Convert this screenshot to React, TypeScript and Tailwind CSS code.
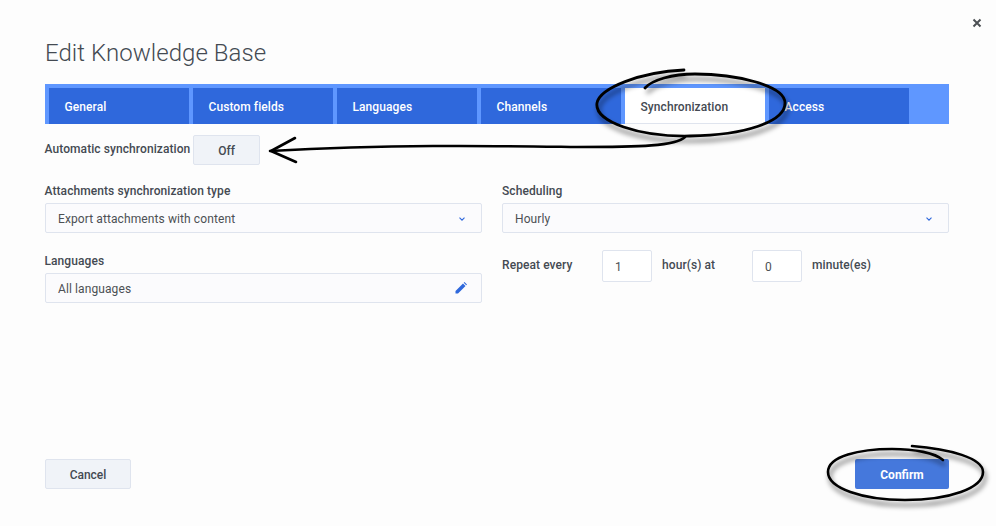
import React from "react";

const tabs = ["General", "Custom fields", "Languages", "Channels", "Synchronization", "Access"];

function Chevron() {
  return (
    <svg width="8" height="6" viewBox="0 0 8 6" fill="none" className="shrink-0 mt-[1px]">
      <path d="M1.5 1.7 L4 4.2 L6.5 1.7" stroke="#2f68dc" strokeWidth="1.1" />
    </svg>
  );
}

function SelectBox({ text, icon }: { text: string; icon: React.ReactNode }) {
  return (
    <div className="h-[30px] flex items-center justify-between pl-[12px] pr-[15px] bg-[#fbfbfd] border border-[#dfe4ee] rounded-[2px] text-[12px] tracking-[0.1px] text-[#4c5054]">
      <span className="pt-[2px]">{text}</span>
      {icon}
    </div>
  );
}

function Label({ children, className = "" }: { children: React.ReactNode; className?: string }) {
  return <div className={`text-[12px] font-medium text-[#444a52] tracking-[0.08px] leading-[14px] ${className}`}>{children}</div>;
}

function Ink() {
  const ellipse1 = "M684 70 C640 72 600 88 597 103 C594 122 640 137 690 136 C745 135 785 122 785 103 C785 85 735 74 695 74 C672 74 652 80 645 88";
  const ellipse2 = "M912 446 C950 449 983 458 983 472 C983 488 950 500 905 500 C862 500 828 488 828 472 C828 456 860 449 892 449 C915 449 935 453 943 460";
  const arrow = "M685 137 C676 146 640 147 577 147 C500 146 400 144 270 151";
  return (
    <svg className="absolute inset-0 pointer-events-none" width="996" height="526" viewBox="0 0 996 526" fill="none">
      <defs>
        <filter id="inkshadow" x="-10%" y="-30%" width="120%" height="160%">
          <feGaussianBlur stdDeviation="2.5" />
        </filter>
      </defs>
      <g stroke="#000" strokeOpacity="0.5" strokeWidth="3" filter="url(#inkshadow)" transform="translate(2 5)">
        <path d={ellipse1} />
        <path d={ellipse2} />
      </g>
      <g stroke="#000" strokeLinecap="round" strokeLinejoin="round">
        <path d={ellipse1} strokeWidth="2.8" />
        <path d={ellipse2} strokeWidth="2.6" />
        <path d={arrow} strokeWidth="2.6" />
        <path d="M295 138 L271 151 L296 162" strokeWidth="2.6" />
      </g>
    </svg>
  );
}

export default function App() {
  return (
    <div
      className="relative w-[996px] h-[526px] overflow-hidden bg-[#fdfdfd] flex flex-col pl-[45px] pr-[47px]"
      style={{ fontFamily: "Roboto, 'Liberation Sans', sans-serif" }}
    >
      <div className="flex justify-end h-[38px] pt-[18px] -mr-[33px]">
        <svg width="10" height="10" viewBox="0 0 10 10">
          <path d="M1.5 1.5 L8.5 8.5 M8.5 1.5 L1.5 8.5" stroke="#4c5054" strokeWidth="2" />
        </svg>
      </div>

      <h1 className="h-[30px] text-[24px] leading-[30px] font-light tracking-[0.05px] text-[#444a52]">Edit Knowledge Base</h1>

      <div className="mt-[16px] h-[40px] bg-[#5f97ff] flex pl-[4px] pt-[4px] gap-[4px] shrink-0">
        {tabs.map((t) => (
          <div
            key={t}
            className={
              t === "Synchronization"
                ? "w-[140px] h-[36px] flex items-center pl-[15.5px] pt-[2px] bg-white text-[#444a52] text-[12px] font-medium tracking-[0.08px] border-b border-[#dfe4ee]"
                : "w-[140px] h-[36px] flex items-center pl-[15.5px] pt-[2px] bg-[#2f68dc] text-white text-[12px] font-medium tracking-[0.08px]"
            }
          >
            {t}
          </div>
        ))}
      </div>

      <div className="mt-[11px] flex items-start">
        <Label className="mt-[7px] -ml-[0.5px] w-[148.5px] whitespace-nowrap">Automatic synchronization</Label>
        <div className="w-[67px] h-[30px] flex items-center justify-center pt-[2px] bg-[#f0f3f8] border border-[#dfe4ee] rounded-[2px] text-[12px] font-medium text-[#444a52]">
          Off
        </div>
      </div>

      <div className="mt-[19px] grid grid-cols-[437px_447px] gap-x-[20px]">
        <div>
          <Label className="h-[19px] -ml-[0.5px]">Attachments synchronization type</Label>
          <SelectBox text="Export attachments with content" icon={<Chevron />} />
          <Label className="mt-[21px] h-[19px] -ml-[0.5px]">Languages</Label>
          <SelectBox
            text="All languages"
            icon={
              <svg width="12" height="12" viewBox="0 0 12 12" className="shrink-0 -mr-[1px]">
                <path d="M0.5 11.5 L0.5 9 L8 1.5 L10.5 4 L3 11.5 Z M8.7 0.8 L9.5 0 L12 2.5 L11.2 3.3 Z" fill="#2f68dc" />
              </svg>
            }
          />
        </div>
        <div>
          <Label className="h-[19px]">Scheduling</Label>
          <SelectBox text="Hourly" icon={<Chevron />} />
          <div className="mt-[17px] flex items-start">
            <Label className="w-[100px] mt-[8px]">Repeat every</Label>
            <div className="w-[50px] h-[32px] flex items-center pl-[12px] pt-[2px] bg-white border border-[#dfe4ee] rounded-[2px] text-[12px] text-[#4c5054]">1</div>
            <Label className="w-[100px] mt-[8px] pl-[10px]">hour(s) at</Label>
            <div className="w-[50px] h-[32px] flex items-center pl-[12px] pt-[2px] bg-white border border-[#dfe4ee] rounded-[2px] text-[12px] text-[#4c5054]">0</div>
            <Label className="mt-[8px] pl-[10px]">minute(es)</Label>
          </div>
        </div>
      </div>

      <div className="mt-auto mb-[37px] flex justify-between">
        <div className="w-[86px] h-[30px] flex items-center justify-center pt-[2px] bg-[#f0f3f8] border border-[#dfe4ee] rounded-[2px] text-[12px] font-medium text-[#444a52]">
          Cancel
        </div>
        <div className="w-[94px] h-[30px] flex items-center justify-center pt-[2px] bg-[#4578dc] rounded-[2px] text-[12px] font-bold text-white">
          Confirm
        </div>
      </div>

      <Ink />
    </div>
  );
}
